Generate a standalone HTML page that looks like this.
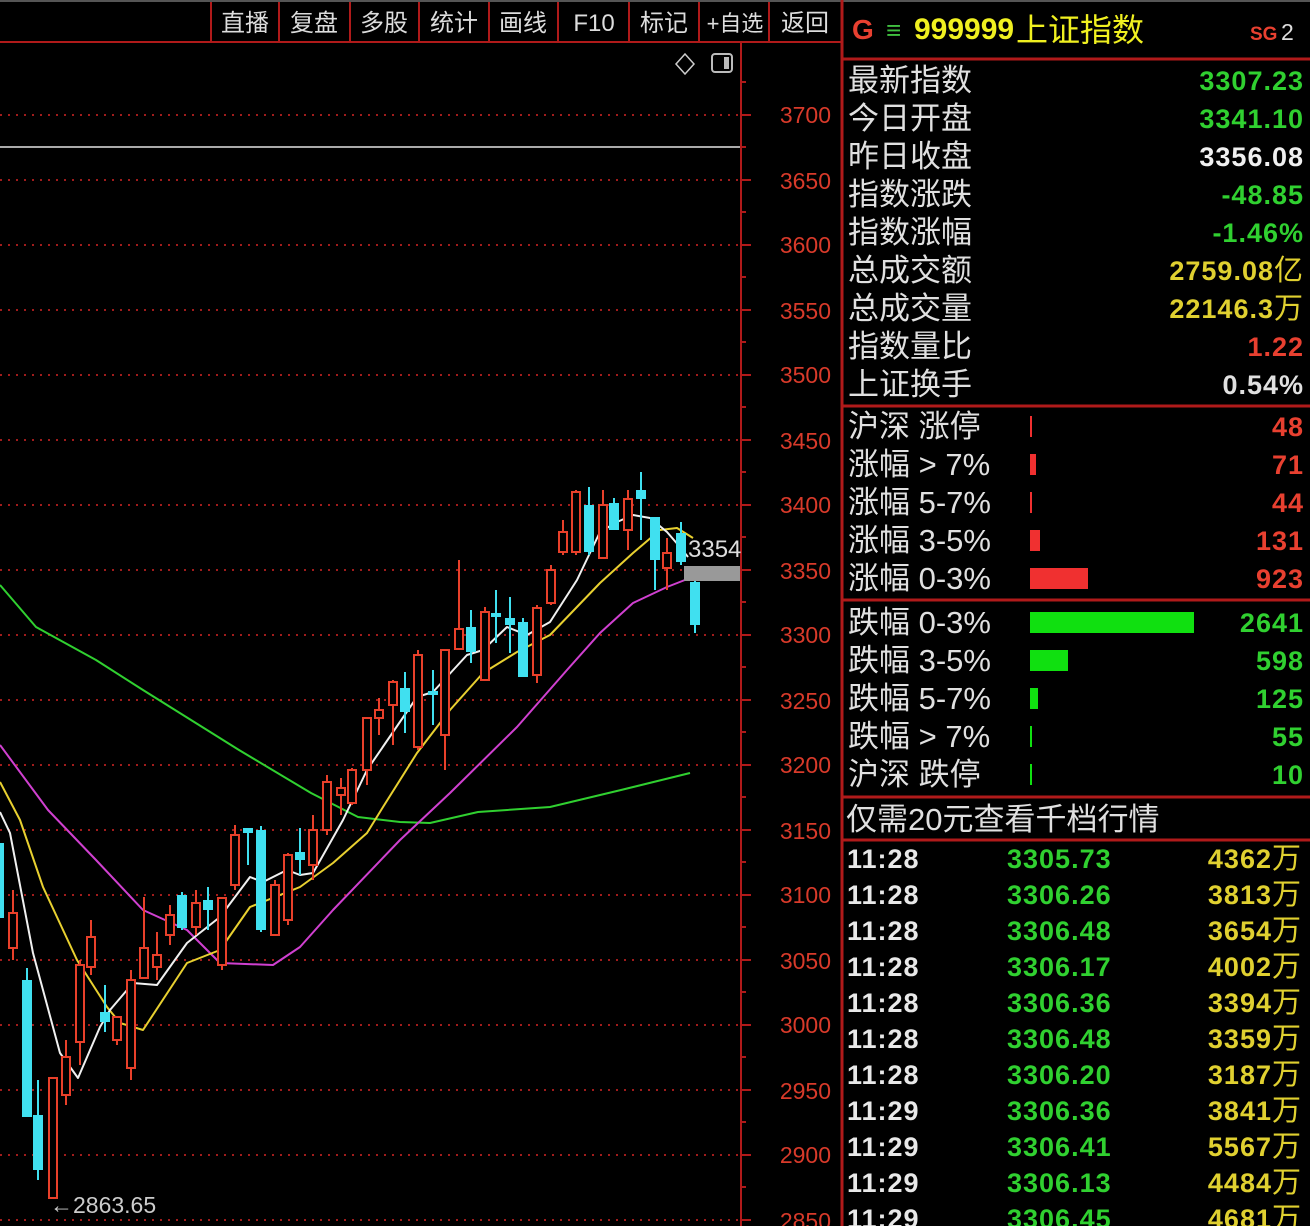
<!DOCTYPE html>
<html><head><meta charset="utf-8"><style>
html,body{margin:0;padding:0;background:#000;width:1310px;height:1226px;overflow:hidden}
svg{display:block}
.cj{font-family:"Liberation Sans","Noto Sans CJK SC",sans-serif}
.n{font-family:"Liberation Sans Narrow","Liberation Sans",sans-serif;font-weight:bold}
</style></head><body>
<svg width="1310" height="1226" viewBox="0 0 1310 1226" xmlns="http://www.w3.org/2000/svg">
<rect width="1310" height="1226" fill="#000"/>
<line x1="0" y1="1" x2="1310" y2="1" stroke="#555" stroke-width="2"/>
<line x1="0" y1="42" x2="842" y2="42" stroke="#b01a1a" stroke-width="2"/>
<g stroke="#b01a1a" stroke-width="2">
<line x1="211" y1="2" x2="211" y2="42"/><line x1="279" y1="2" x2="279" y2="42"/><line x1="350" y1="2" x2="350" y2="42"/><line x1="419" y1="2" x2="419" y2="42"/><line x1="489" y1="2" x2="489" y2="42"/><line x1="558" y1="2" x2="558" y2="42"/><line x1="629" y1="2" x2="629" y2="42"/><line x1="699" y1="2" x2="699" y2="42"/><line x1="769" y1="2" x2="769" y2="42"/>
</g>
<g class="cj" fill="#ddd" font-size="24" text-anchor="middle">
<text x="245" y="31">直播</text><text x="314" y="31">复盘</text><text x="384" y="31">多股</text><text x="454" y="31">统计</text><text x="523" y="31">画线</text><text x="594" y="31">F10</text><text x="664" y="31">标记</text><text x="735" y="31" font-size="22">+自选</text><text x="805" y="31">返回</text>
</g>
<path d="M685 54 L694 64 L685 74 L676 64 Z" fill="none" stroke="#ccc" stroke-width="1.5"/>
<rect x="712" y="54" width="20" height="18" rx="3" fill="none" stroke="#bbb" stroke-width="2"/>
<rect x="724" y="57" width="5" height="12" fill="#bbb"/>
<g stroke="#a01c1c" stroke-width="2" stroke-dasharray="2 6">
<line x1="0" y1="115" x2="740" y2="115"/><line x1="0" y1="180" x2="740" y2="180"/><line x1="0" y1="245" x2="740" y2="245"/><line x1="0" y1="310" x2="740" y2="310"/><line x1="0" y1="375" x2="740" y2="375"/><line x1="0" y1="440" x2="740" y2="440"/><line x1="0" y1="505" x2="740" y2="505"/><line x1="0" y1="570" x2="740" y2="570"/><line x1="0" y1="635" x2="740" y2="635"/><line x1="0" y1="700" x2="740" y2="700"/><line x1="0" y1="765" x2="740" y2="765"/><line x1="0" y1="830" x2="740" y2="830"/><line x1="0" y1="895" x2="740" y2="895"/><line x1="0" y1="960" x2="740" y2="960"/><line x1="0" y1="1025" x2="740" y2="1025"/><line x1="0" y1="1090" x2="740" y2="1090"/><line x1="0" y1="1155" x2="740" y2="1155"/><line x1="0" y1="1220" x2="740" y2="1220"/>
</g>
<line x1="0" y1="147" x2="740" y2="147" stroke="#aaa" stroke-width="2"/>
<line x1="741" y1="42" x2="741" y2="1226" stroke="#b01a1a" stroke-width="2"/>
<line x1="842" y1="0" x2="842" y2="1226" stroke="#b01a1a" stroke-width="3"/>
<g stroke="#b01a1a" stroke-width="2">
<path d="M741 115h10M741 180h10M741 245h10M741 310h10M741 375h10M741 440h10M741 505h10M741 570h10M741 635h10M741 700h10M741 765h10M741 830h10M741 895h10M741 960h10M741 1025h10M741 1090h10M741 1155h10M741 1220h10"/>
<path d="M741 82h5M741 147h5M741 212h5M741 277h5M741 342h5M741 407h5M741 472h5M741 537h5M741 602h5M741 667h5M741 732h5M741 797h5M741 862h5M741 927h5M741 992h5M741 1057h5M741 1122h5M741 1187h5"/>
</g>
<g font-family="Liberation Sans Narrow,Liberation Sans,sans-serif" fill="#d83a2a" font-size="23" text-anchor="end">
<text x="831" y="123">3700</text><text x="831" y="189">3650</text><text x="831" y="253">3600</text><text x="831" y="319">3550</text><text x="831" y="383">3500</text><text x="831" y="449">3450</text><text x="831" y="513">3400</text><text x="831" y="579">3350</text><text x="831" y="643">3300</text><text x="831" y="709">3250</text><text x="831" y="773">3200</text><text x="831" y="839">3150</text><text x="831" y="903">3100</text><text x="831" y="969">3050</text><text x="831" y="1033">3000</text><text x="831" y="1099">2950</text><text x="831" y="1163">2900</text><text x="831" y="1229">2850</text>
</g>
<g fill="none" stroke-width="2" stroke-linejoin="round">
<polyline stroke="#30d030" points="0,585 36,627 96,660 143,690 239,750 311,793 358,817 400,822 430,823 478,812 550,807 621,790 690,773"/>
<polyline stroke="#d040d0" points="0,745 48,810 96,860 143,910 187,930 220,963 273,965 300,947 333,910 400,840 450,793 517,727 567,670 600,633 633,603 667,587 690,578"/>
<polyline stroke="#e8d030" points="0,782 20,820 43,887 77,960 107,1007 120,1023 143,1030 187,963 220,950 250,907 300,887 333,863 367,833 383,807 417,753 450,710 483,673 517,652 550,635 600,583 633,553 660,530 677,528 693,538"/>
<polyline stroke="#f0f0f0" points="0,812 10,833 33,953 60,1053 78,1078 100,1027 110,1010 133,983 157,985 187,943 220,917 250,877 263,882 287,870 300,875 313,873 343,820 367,770 417,697 433,692 467,655 483,650 507,627 527,635 550,622 577,580 600,532 617,522 633,515 650,518 667,532 680,547 688,557"/>
</g>
<g stroke-width="2">
<g stroke="#e8402a">
<path d="M13 890V960M53 1078V1198M66 1040V1105M80 960V1065M91 920V975M117 1017V1045M131 970V1080M144 897V978M157 932V980M170 905V945M196 890V935M222 898V970M235 825V890M275 880V935M288 853V925M313 815V880M327 775V835M341 778V815M352 768V805M367 718V785M379 698V735M393 680V745M418 650V750M445 650V770M459 560V649M485 607V680M537 605V683M551 565V605M563 520V555M576 490V555M603 490V558M628 490V550M667 538V590"/>
</g>
<g fill="#000" stroke="#e8402a">
<rect x="9" y="913" width="8" height="35"/><rect x="49" y="1078" width="8" height="120"/><rect x="62" y="1057" width="8" height="38"/><rect x="76" y="965" width="8" height="77"/><rect x="87" y="937" width="8" height="30"/><rect x="113" y="1017" width="8" height="23"/><rect x="127" y="980" width="8" height="88"/><rect x="140" y="948" width="8" height="30"/><rect x="153" y="955" width="8" height="12"/><rect x="166" y="915" width="8" height="20"/><rect x="192" y="903" width="8" height="24"/><rect x="218" y="898" width="8" height="67"/><rect x="231" y="835" width="8" height="50"/><rect x="271" y="885" width="8" height="50"/><rect x="284" y="855" width="8" height="65"/><rect x="309" y="830" width="8" height="35"/><rect x="323" y="782" width="8" height="48"/><rect x="337" y="788" width="8" height="7"/><rect x="348" y="770" width="8" height="33"/><rect x="363" y="718" width="8" height="52"/><rect x="375" y="710" width="8" height="8"/><rect x="389" y="682" width="8" height="23"/><rect x="414" y="655" width="8" height="92"/><rect x="441" y="650" width="8" height="85"/><rect x="455" y="629" width="8" height="20"/><rect x="481" y="612" width="8" height="68"/><rect x="533" y="608" width="8" height="67"/><rect x="547" y="570" width="8" height="33"/><rect x="559" y="532" width="8" height="20"/><rect x="572" y="492" width="8" height="60"/><rect x="599" y="505" width="8" height="53"/><rect x="624" y="499" width="8" height="31"/><rect x="663" y="553" width="8" height="15"/>
</g>
<g stroke="#40e0f0">
<path d="M27 968V1117M38 1080V1180M105 985V1032M182 892V930M208 887V930M248 828V865M261 826V932M300 828V875M405 672V733M433 670V725M471 610V663M496 590V643M510 597V653M523 618V677M589 487V555M614 498V530M641 472V540M655 517V590M681 522V565M695 575V633"/>
</g>
<g fill="#40e0f0" stroke="none">
<rect x="-1" y="843" width="5" height="75"/><rect x="22" y="980" width="10" height="137"/><rect x="33" y="1115" width="10" height="55"/><rect x="100" y="1012" width="10" height="10"/><rect x="177" y="895" width="10" height="33"/><rect x="203" y="900" width="10" height="10"/><rect x="243" y="828" width="10" height="5"/><rect x="256" y="830" width="10" height="100"/><rect x="295" y="852" width="10" height="8"/><rect x="400" y="688" width="10" height="24"/><rect x="428" y="691" width="10" height="4"/><rect x="466" y="627" width="10" height="25"/><rect x="491" y="613" width="10" height="4"/><rect x="505" y="618" width="10" height="7"/><rect x="518" y="622" width="10" height="55"/><rect x="584" y="505" width="10" height="47"/><rect x="609" y="503" width="10" height="27"/><rect x="636" y="490" width="10" height="9"/><rect x="650" y="517" width="10" height="43"/><rect x="676" y="533" width="10" height="29"/><rect x="690" y="582" width="10" height="43"/>
</g>
</g>
<rect x="684" y="566" width="56" height="15" fill="#999"/>
<text x="688" y="557" font-family="Liberation Sans Narrow,Liberation Sans,sans-serif" font-size="24" fill="#ddd">3354</text>
<text x="50" y="1213" font-family="Liberation Sans Narrow,Liberation Sans,sans-serif" font-size="23" fill="#ccc">←2863.65</text>

<g stroke="#b01a1a" stroke-width="3">
<line x1="842" y1="59" x2="1310" y2="59"/><line x1="842" y1="406" x2="1310" y2="406"/><line x1="842" y1="600" x2="1310" y2="600"/><line x1="842" y1="797" x2="1310" y2="797"/><line x1="842" y1="840" x2="1310" y2="840"/>
</g>
<text x="852" y="39" class="n" font-size="28" fill="#e84030">G</text>
<text x="886" y="39" class="cj" font-size="26" fill="#40c040">≡</text>
<text x="914" y="39" class="n" font-size="30" fill="#f0f020">999999</text>
<text x="1016" y="41" class="cj" font-size="32" fill="#f0f020">上证指数</text>
<text x="1250" y="40" class="n" font-size="19" fill="#e84030">SG</text>
<text x="1281" y="40" font-family="Liberation Sans Narrow,Liberation Sans,sans-serif" font-size="23" fill="#ddd">2</text>
<g class="cj" font-size="31" fill="#e0e0e0">
<text x="848" y="91">最新指数</text><text x="848" y="129">今日开盘</text><text x="848" y="167">昨日收盘</text><text x="848" y="205">指数涨跌</text><text x="848" y="243">指数涨幅</text><text x="848" y="281">总成交额</text><text x="848" y="319">总成交量</text><text x="848" y="357">指数量比</text><text x="848" y="395">上证换手</text>
<text x="848" y="437">沪深 涨停</text><text x="848" y="475">涨幅 &gt; 7%</text><text x="848" y="513">涨幅 5-7%</text><text x="848" y="551">涨幅 3-5%</text><text x="848" y="589">涨幅 0-3%</text>
<text x="848" y="633">跌幅 0-3%</text><text x="848" y="671">跌幅 3-5%</text><text x="848" y="709">跌幅 5-7%</text><text x="848" y="747">跌幅 &gt; 7%</text><text x="848" y="785">沪深 跌停</text>
<text x="846" y="830">仅需20元查看千档行情</text>
</g>
<g class="n" font-size="27" text-anchor="end" letter-spacing="1">
<text x="1304" y="90" fill="#30d030">3307.23</text><text x="1304" y="128" fill="#30d030">3341.10</text><text x="1304" y="166" fill="#f0f0f0">3356.08</text><text x="1304" y="204" fill="#30d030">-48.85</text><text x="1304" y="242" fill="#30d030">-1.46%</text>
<text x="1304" y="280" fill="#e0d030">2759.08<tspan class="cj" font-weight="normal" font-size="29">亿</tspan></text>
<text x="1304" y="318" fill="#e0d030">22146.3<tspan class="cj" font-weight="normal" font-size="29">万</tspan></text>
<text x="1304" y="356" fill="#e84030">1.22</text><text x="1304" y="394" fill="#e0e0e0">0.54%</text>
<text x="1304" y="436" fill="#e84030">48</text><text x="1304" y="474" fill="#e84030">71</text><text x="1304" y="512" fill="#e84030">44</text><text x="1304" y="550" fill="#e84030">131</text><text x="1304" y="588" fill="#e84030">923</text>
<text x="1304" y="632" fill="#30d030">2641</text><text x="1304" y="670" fill="#30d030">598</text><text x="1304" y="708" fill="#30d030">125</text><text x="1304" y="746" fill="#30d030">55</text><text x="1304" y="784" fill="#30d030">10</text>
</g>
<g fill="#f03030">
<rect x="1030" y="416" width="2" height="21"/><rect x="1030" y="454" width="6" height="21"/><rect x="1030" y="492" width="2" height="21"/><rect x="1030" y="530" width="10" height="21"/><rect x="1030" y="568" width="58" height="21"/>
</g>
<g fill="#10e010">
<rect x="1030" y="612" width="164" height="21"/><rect x="1030" y="650" width="38" height="21"/><rect x="1030" y="688" width="8" height="21"/><rect x="1030" y="726" width="2" height="21"/><rect x="1030" y="764" width="2" height="21"/>
</g>
<g class="n" font-size="27" letter-spacing="1">
<g fill="#e8e8e8">
<text x="847" y="868">11:28</text><text x="847" y="904">11:28</text><text x="847" y="940">11:28</text><text x="847" y="976">11:28</text><text x="847" y="1012">11:28</text><text x="847" y="1048">11:28</text><text x="847" y="1084">11:28</text><text x="847" y="1120">11:29</text><text x="847" y="1156">11:29</text><text x="847" y="1192">11:29</text><text x="847" y="1228">11:29</text>
</g>
<g fill="#30d030">
<text x="1007" y="868">3305.73</text><text x="1007" y="904">3306.26</text><text x="1007" y="940">3306.48</text><text x="1007" y="976">3306.17</text><text x="1007" y="1012">3306.36</text><text x="1007" y="1048">3306.48</text><text x="1007" y="1084">3306.20</text><text x="1007" y="1120">3306.36</text><text x="1007" y="1156">3306.41</text><text x="1007" y="1192">3306.13</text><text x="1007" y="1228">3306.45</text>
</g>
<g fill="#e0d030" text-anchor="end">
<text x="1302" y="868">4362<tspan class="cj" font-weight="normal" font-size="29">万</tspan></text><text x="1302" y="904">3813<tspan class="cj" font-weight="normal" font-size="29">万</tspan></text><text x="1302" y="940">3654<tspan class="cj" font-weight="normal" font-size="29">万</tspan></text><text x="1302" y="976">4002<tspan class="cj" font-weight="normal" font-size="29">万</tspan></text><text x="1302" y="1012">3394<tspan class="cj" font-weight="normal" font-size="29">万</tspan></text><text x="1302" y="1048">3359<tspan class="cj" font-weight="normal" font-size="29">万</tspan></text><text x="1302" y="1084">3187<tspan class="cj" font-weight="normal" font-size="29">万</tspan></text><text x="1302" y="1120">3841<tspan class="cj" font-weight="normal" font-size="29">万</tspan></text><text x="1302" y="1156">5567<tspan class="cj" font-weight="normal" font-size="29">万</tspan></text><text x="1302" y="1192">4484<tspan class="cj" font-weight="normal" font-size="29">万</tspan></text><text x="1302" y="1228">4681<tspan class="cj" font-weight="normal" font-size="29">万</tspan></text>
</g>
</g>
</svg>
</body></html>
